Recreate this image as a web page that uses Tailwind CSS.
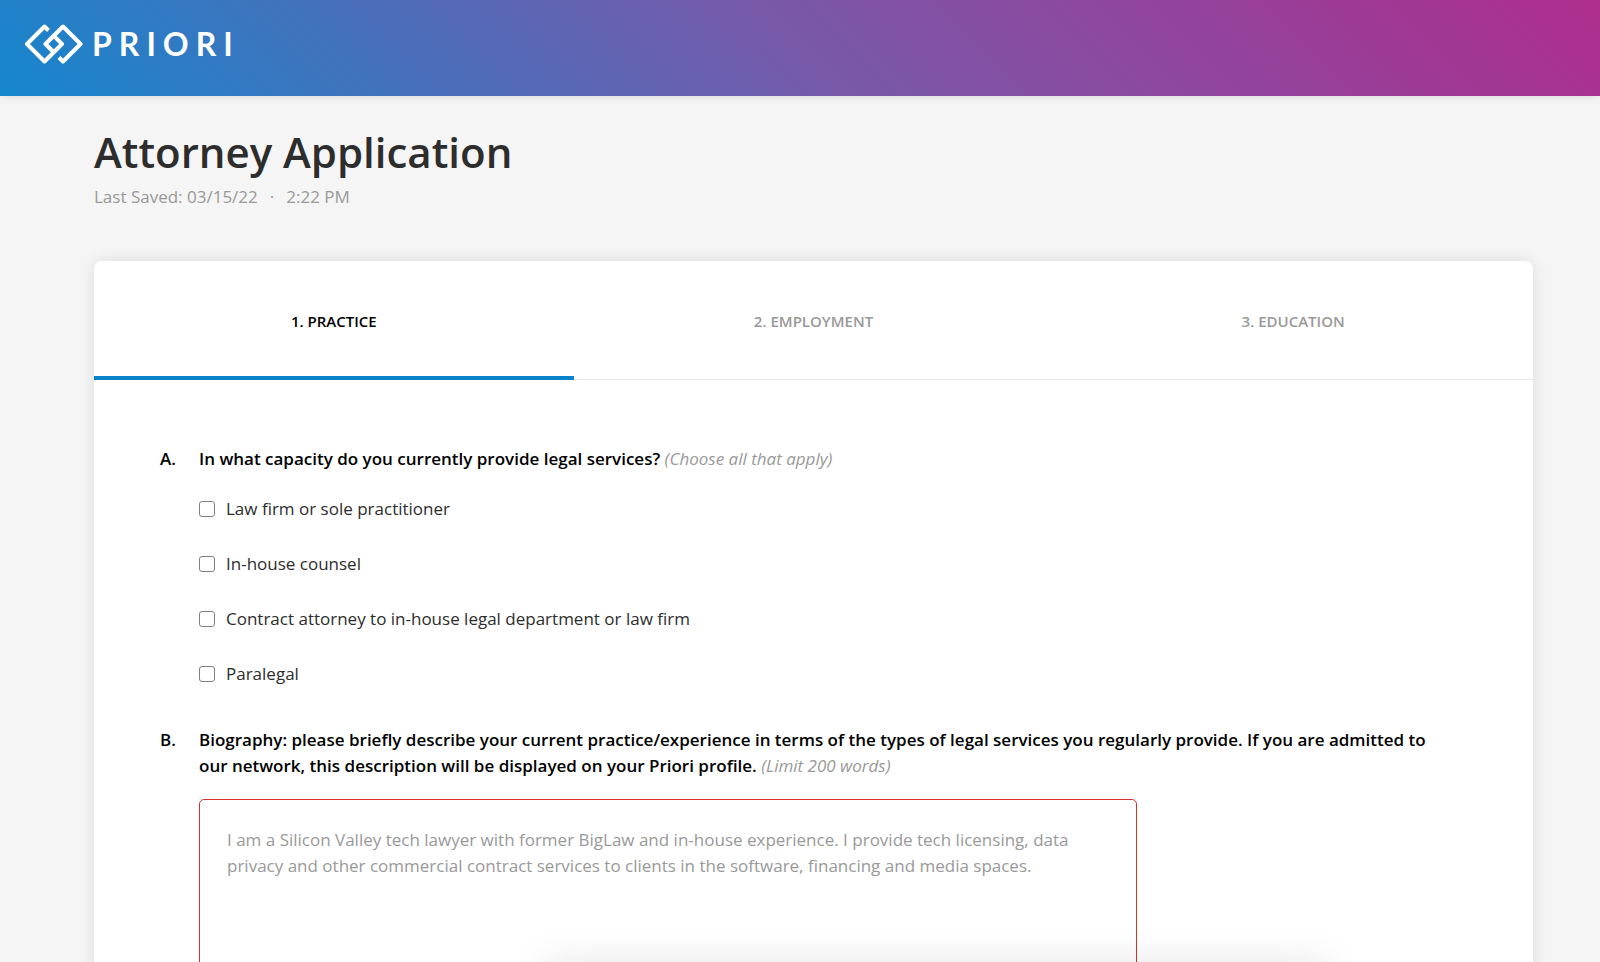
<!DOCTYPE html>
<html lang="en">
  <head>
    <meta charset="UTF-8" />
    <meta name="viewport" content="width=device-width, initial-scale=1.0" />
    <script src="https://cdn.jsdelivr.net/npm/@tailwindcss/browser@4"></script>
    <title>Attorney Application</title>
  </head>
  <body
    class="min-h-screen bg-[#f5f5f5] font-['Open_Sans',sans-serif] text-[17px] leading-[26px] text-[#2d2d2d]"
  >
    <header
      class="relative flex h-24 items-start bg-linear-45/srgb from-[#1587cd] via-[#7859aa] to-[#ae2d8d] px-6 pt-6 shadow-[0_1px_8px_rgba(0,0,0,0.1)]"
    >
      <a href="#" class="flex h-10 items-center gap-2 text-white">
        <svg
          class="h-10 w-[60px]"
          viewBox="0 0 60 40"
          fill="none"
          stroke="currentColor"
          stroke-width="4"
          stroke-linejoin="round"
          aria-hidden="true"
        >
          <path d="M24.5 6.5 L20.5 2.5 L3 20 L20.5 37.5 L38 20 L29 11" />
          <path d="M35 33.5 L39 37.5 L56.5 20 L39 2.5 L21.5 20 L30 28.5" />
        </svg>
        <span class="font-['Lato',sans-serif] text-[32px] leading-10 font-bold tracking-[7px]">PRIORI</span>
      </a>
    </header>

    <main class="pr-[67px] pl-[94px]">
      <h1 class="pt-7 text-[42px] leading-14 font-semibold">
        Attorney Application
      </h1>
      <p class="mt-1 flex gap-3 text-[#999999]">
        <span>Last Saved: 03/15/22</span>
        <span>·</span>
        <span>2:22 PM</span>
      </p>

      <section
        class="mt-[51px] rounded-lg bg-white pb-16 shadow-[0_0_16px_rgba(0,0,0,0.1)]"
      >
        <nav
          class="grid h-[119px] grid-cols-3 border-b border-[#e8e8e8] text-[15px] font-semibold"
        >
          <a href="#practice" class="-mb-px flex items-center justify-center border-b-4 border-[#0a82cb] pt-1 text-black">1. PRACTICE</a>
          <a href="#employment" class="flex items-center justify-center pt-0.5 text-[#999999]">2. EMPLOYMENT</a>
          <a href="#education" class="flex items-center justify-center pt-0.5 text-[#999999]">3. EDUCATION</a>
        </nav>

        <form class="pt-[66px] pr-[84px] pl-[66px]">
          <!-- Question A -->
          <fieldset class="grid grid-cols-[39px_1fr]" aria-labelledby="capacity">
            <span class="font-semibold text-black">A.</span>
            <div>
              <p id="capacity" class="font-semibold text-black">
                In what capacity do you currently provide legal services?
                <em class="font-normal text-[#999999]">(Choose all that apply)</em>
              </p>
              <div class="mt-6 flex flex-col items-start gap-[29px]">
                <label class="flex items-center gap-[11px]">
                  <input type="checkbox" name="capacity" class="size-4 appearance-none rounded-[3px] border border-[#808080] checked:bg-[#0a82cb]" />
                  Law firm or sole practitioner
                </label>
                <label class="flex items-center gap-[11px]">
                  <input type="checkbox" name="capacity" class="size-4 appearance-none rounded-[3px] border border-[#808080] checked:bg-[#0a82cb]" />
                  In-house counsel
                </label>
                <label class="flex items-center gap-[11px]">
                  <input type="checkbox" name="capacity" class="size-4 appearance-none rounded-[3px] border border-[#808080] checked:bg-[#0a82cb]" />
                  Contract attorney to in-house legal department or law firm
                </label>
                <label class="flex items-center gap-[11px]">
                  <input type="checkbox" name="capacity" class="size-4 appearance-none rounded-[3px] border border-[#808080] checked:bg-[#0a82cb]" />
                  Paralegal
                </label>
              </div>
            </div>
          </fieldset>

          <!-- Question B -->
          <div class="mt-10 grid grid-cols-[39px_1fr]">
            <span class="font-semibold text-black">B.</span>
            <div>
              <label for="biography" class="block font-semibold text-black">
                Biography: please briefly describe your current
                practice/experience in terms of the types of legal services you
                regularly provide. If you are admitted to our network, this
                description will be displayed on your Priori profile.
                <em class="font-normal text-[#999999]">(Limit 200 words)</em>
              </label>
              <textarea
                id="biography"
                class="mt-5 block h-64 w-3/4 resize-none rounded-[5px] border border-[#dc2f2f] px-[27px] py-[27px] placeholder:text-[#999999]"
                placeholder="I am a Silicon Valley tech lawyer with former BigLaw and in-house experience. I provide tech licensing, data privacy and other commercial contract services to clients in the software, financing and media spaces."
              ></textarea>
            </div>
          </div>
        </form>
      </section>
    </main>

    <!-- Floating save bar, parked just below the fold -->
    <div
      class="fixed top-full right-[17%] left-[34%] h-20 rounded-lg bg-white shadow-[0_0_40px_rgba(0,0,0,0.1)]"
    ></div>
  </body>
</html>
